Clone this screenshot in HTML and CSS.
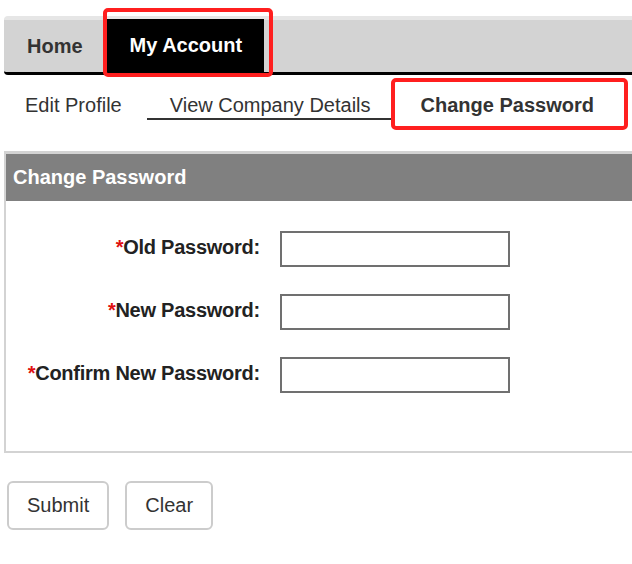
FILE: index.html
```html
<!DOCTYPE html>
<html lang="en">
<head>
<meta charset="utf-8">
<title>Change Password</title>
<link rel="stylesheet" href="styles.css">
</head>
<body>
<div class="page">
  <nav class="tabbar">
    <a class="tab">Home</a>
    <a class="tab active">My Account</a>
  </nav>
  <nav class="subnav">
    <a class="subitem first">Edit Profile</a>
    <a class="subitem current">View Company Details</a>
    <a class="subitem selected">Change Password</a>
  </nav>
  <section class="panel">
    <h2 class="panel-title">Change Password</h2>
    <form class="form">
      <label class="label"><span class="req">*</span>Old Password:</label>
      <input class="field" type="password">
      <label class="label"><span class="req">*</span>New Password:</label>
      <input class="field" type="password">
      <label class="label"><span class="req">*</span>Confirm New Password:</label>
      <input class="field" type="password">
    </form>
  </section>
  <div class="actions">
    <button class="btn" type="button">Submit</button>
    <button class="btn" type="button">Clear</button>
  </div>
  <div class="mark mark-account"></div>
  <div class="mark mark-password"></div>
</div>
</body>
</html>
```

FILE: styles.css
```css
html, body {
  margin: 0;
  padding: 0;
  background: #fff;
}
body {
  overflow: hidden;
  font-family: "Liberation Sans", Arial, sans-serif;
  color: #333;
}
.page {
  position: relative;
  box-sizing: border-box;
  width: 632px;
  height: 564px;
  padding-top: 16px;
  overflow: hidden;
}
.tabbar {
  display: flex;
  margin: 0 0 0 4px;
  height: 52px;
  background: #d3d3d3;
  border-top: 4px solid #e6e6e6;
  border-bottom: 3px solid #000;
  border-radius: 4px 0 0 4px;
}
.tab {
  display: block;
  padding: 0 24px 0 23px;
  line-height: 52px;
  font-size: 20px;
  font-weight: bold;
  color: #333;
}
.tab.active {
  background: #000;
  color: #fff;
  padding: 0 22px 0 23px;
  margin-top: -1px;
  line-height: 53px;
}
.subnav {
  display: flex;
  margin-left: 4px;
}
.subitem {
  display: block;
  padding: 18px 22px 1px 21px;
  line-height: 24px;
  font-size: 20px;
  color: #333;
  border-bottom: 2px solid transparent;
  white-space: nowrap;
}
.subitem.current {
  margin-left: 3px;
  padding: 18px 21px 1px 23px;
  border-bottom-color: #333;
}
.subitem.selected {
  font-weight: bold;
  padding-left: 29px;
}
.panel {
  margin: 31px 0 0 4px;
  border: 2px solid #d3d3d3;
  border-top-width: 3px;
  border-right: 0;
}
.panel-title {
  margin: 0;
  height: 47px;
  line-height: 47px;
  padding-left: 7px;
  background: #808080;
  color: #fff;
  font-size: 20px;
  font-weight: bold;
}
.form {
  display: grid;
  grid-template-columns: 254px 230px;
  column-gap: 20px;
  row-gap: 27px;
  padding: 30px 0 58px;
}
.label {
  align-self: center;
  text-align: right;
  font-size: 20px;
  font-weight: bold;
  line-height: 24px;
  letter-spacing: -0.25px;
  color: #222;
  padding-bottom: 4px;
  white-space: nowrap;
}
.req {
  color: #e01010;
}
.field {
  box-sizing: border-box;
  width: 230px;
  height: 36px;
  margin: 0;
  border: 2px solid #707070;
  border-radius: 0;
  background: #fff;
}
.actions {
  display: flex;
  gap: 16px;
  margin: 28px 0 0 7px;
}
.btn {
  box-sizing: border-box;
  height: 49px;
  padding: 0 18px;
  border: 2px solid #cccccc;
  border-radius: 6px;
  background: #fff;
  font-family: "Liberation Sans", Arial, sans-serif;
  font-size: 20px;
  color: #333;
}
.mark {
  position: absolute;
  box-sizing: border-box;
  border: 4px solid #ff1f1f;
  border-radius: 5px;
}
.mark-account {
  left: 103px;
  top: 8px;
  width: 170px;
  height: 69px;
}
.mark-password {
  left: 391px;
  top: 78px;
  width: 237px;
  height: 52px;
}
```
